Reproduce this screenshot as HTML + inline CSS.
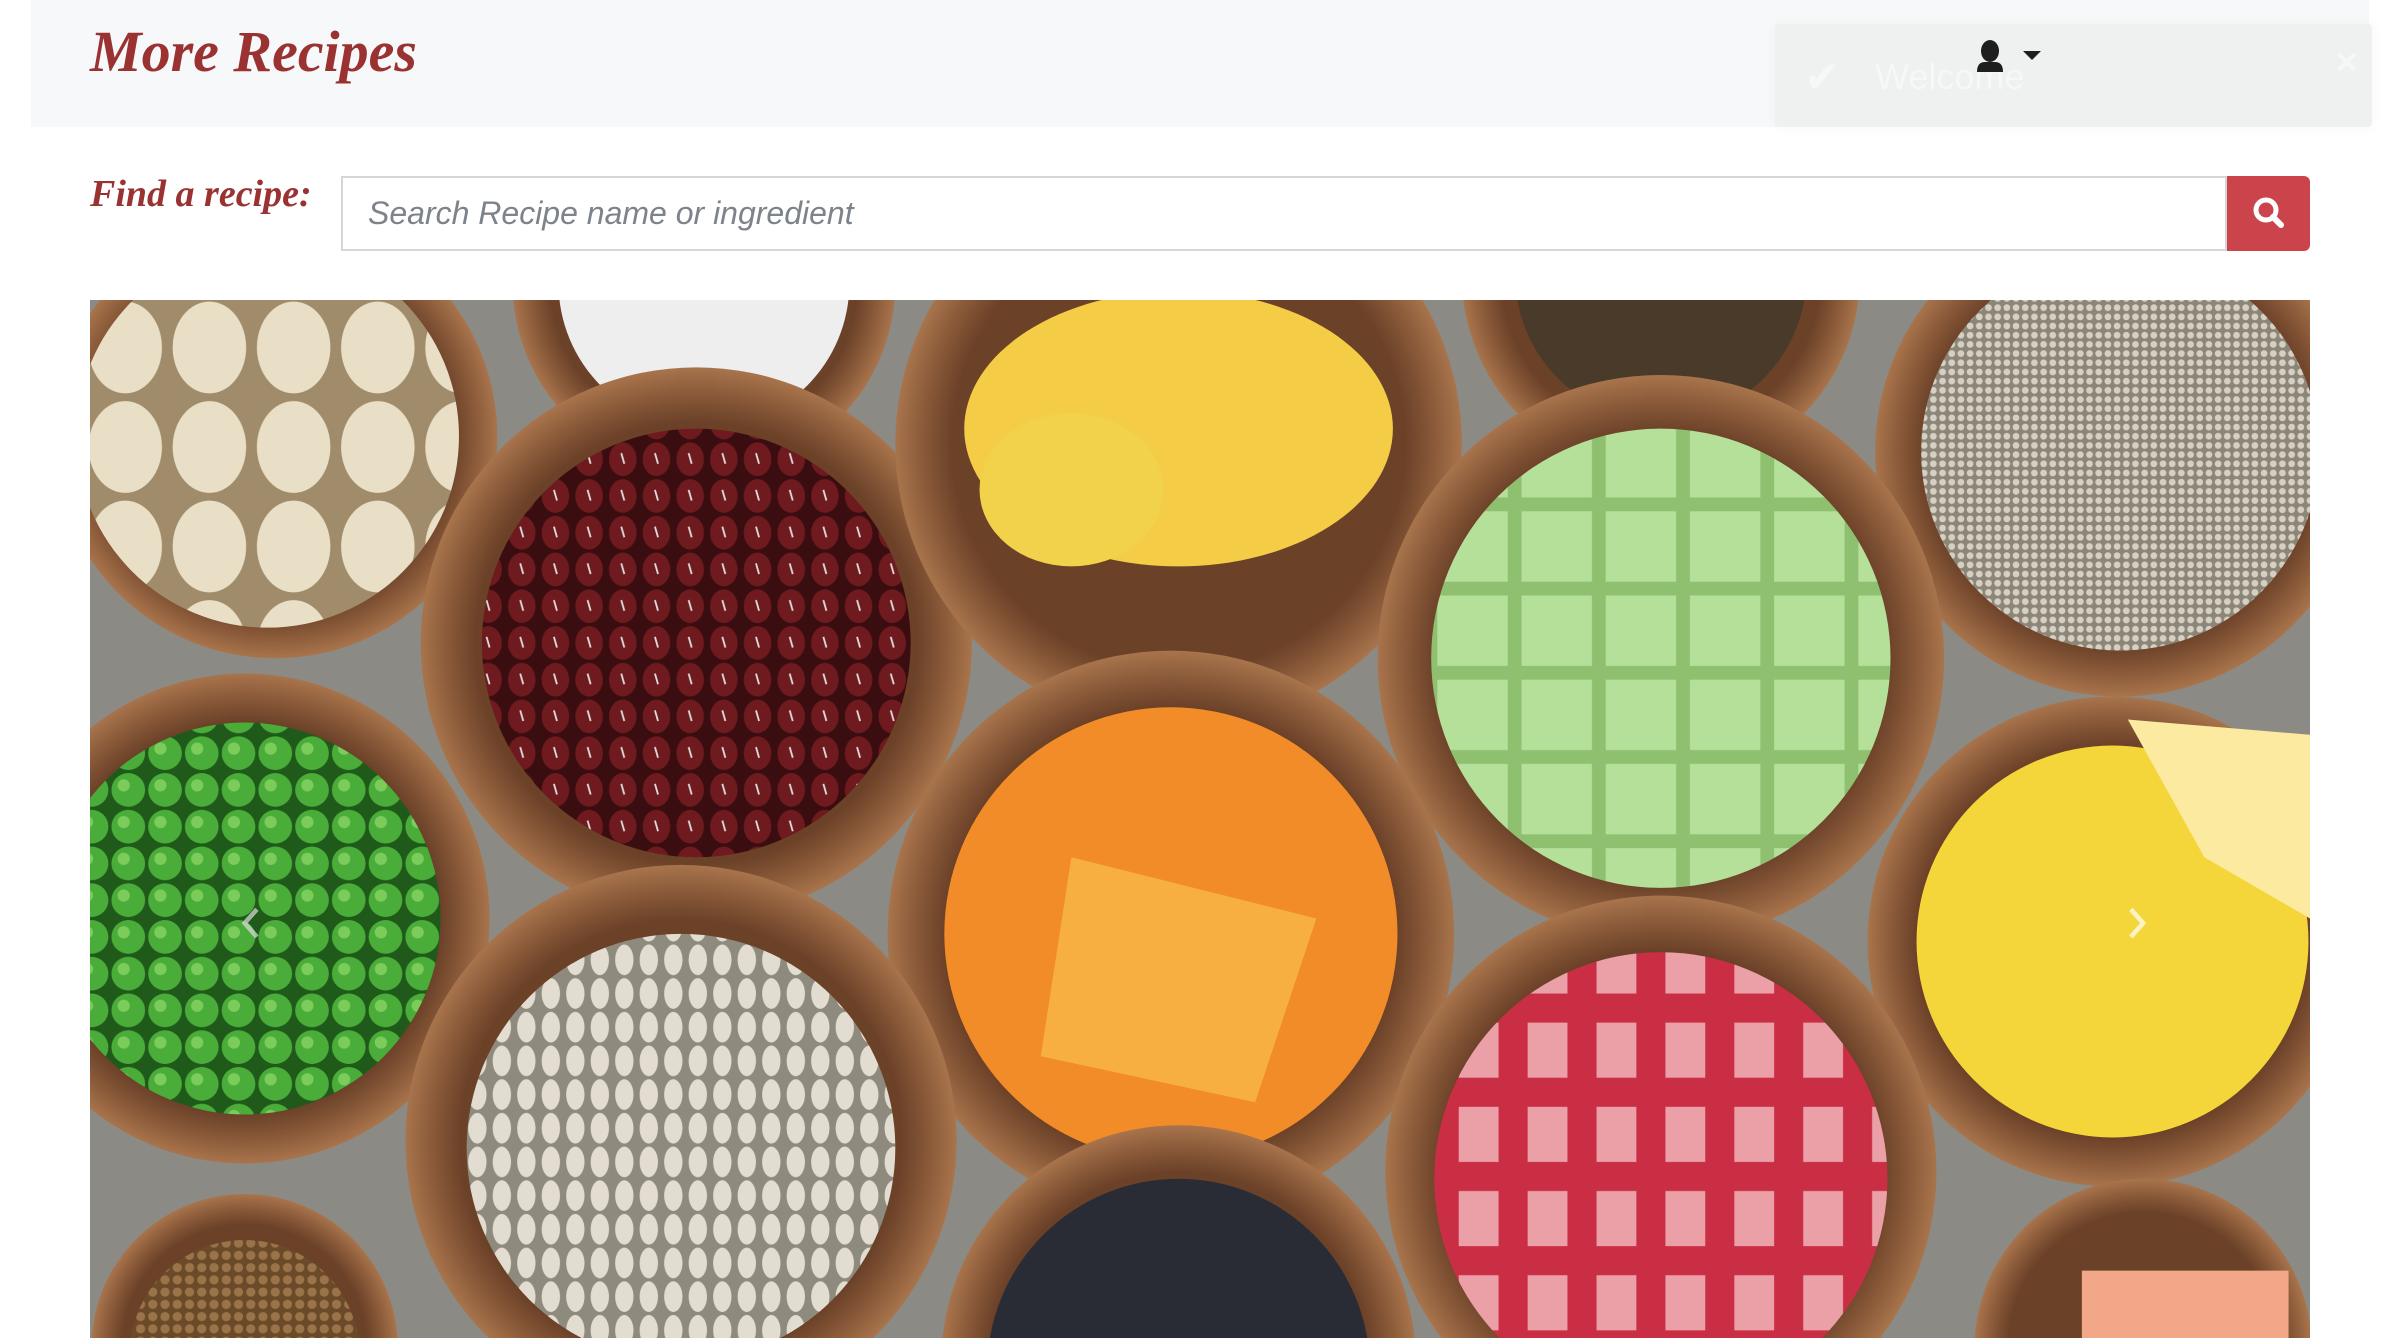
<!DOCTYPE html>
<html><head><meta charset="utf-8">
<style>
html,body{margin:0;padding:0;width:2400px;height:1338px;overflow:hidden;background:#fff;font-family:"Liberation Sans",sans-serif}
.nav{position:absolute;left:31px;top:0;width:2338px;height:127px;background:#f7f8fa}
.logo{position:absolute;left:90px;top:18px;font-family:"Liberation Serif",serif;font-style:italic;font-weight:bold;font-size:58px;color:#9a3232}
.toast{position:absolute;left:1775px;top:24px;width:597px;height:103px;background:#eef1f0;box-shadow:0 0 14px rgba(0,0,0,0.04);border-radius:4px}
.welcome{position:absolute;left:1875px;top:56px;font-size:36px;color:#f6f7f7}
.check{position:absolute;left:1804px;top:52px;font-size:44px;color:#f6f7f7}
.x{position:absolute;left:2334px;top:46px;font-size:30px;color:#f6f7f7;font-weight:bold}
.find{position:absolute;left:90px;top:172px;font-family:"Liberation Serif",serif;font-style:italic;font-weight:bold;font-size:38px;color:#9a3232}
.input{position:absolute;left:341px;top:176px;width:1882px;height:71px;border:2px solid #d6d6d6;background:#fff}
.ph{position:absolute;left:368px;top:195px;font-style:italic;font-size:32px;color:#7d838a}
.btn{position:absolute;left:2227px;top:176px;width:83px;height:75px;background:#cc444b;border-radius:0 6px 6px 0}
.img{position:absolute;left:90px;top:300px;width:2220px;height:1038px;display:block}
</style></head><body>
<div class="nav"></div>
<div class="logo">More Recipes</div>
<div class="toast"></div>
<div class="check">✔</div>
<div class="welcome">Welcome</div>
<div class="x">✕</div>
<svg style="position:absolute;left:1970px;top:36px" width="80" height="40" viewBox="0 0 80 40">
<ellipse cx="20" cy="15" rx="9" ry="11" fill="#1e1e1e"/>
<path d="M7 36 Q7 26 15 26 L25 26 Q33 26 33 36 Z" fill="#1e1e1e"/>
<path d="M53 15 L71 15 L62 24 Z" fill="#1e1e1e"/>
</svg>
<div class="find">Find a recipe:</div>
<div class="input"></div>
<div class="ph">Search Recipe name or ingredient</div>
<div class="btn"><svg width="83" height="75" viewBox="0 0 83 75"><circle cx="39" cy="34" r="10" fill="none" stroke="#fff" stroke-width="5"/><line x1="46" y1="41" x2="54" y2="49" stroke="#fff" stroke-width="6" stroke-linecap="round"/></svg></div>
<svg class="img" viewBox="59 196 1450 678" preserveAspectRatio="none">
<defs>
<radialGradient id="wood" cx="50%" cy="50%" r="50%"><stop offset="80%" stop-color="#6b4128"/><stop offset="92%" stop-color="#8f5e3c"/><stop offset="100%" stop-color="#a8744c"/></radialGradient>
<pattern id="beans" width="22" height="24" patternUnits="userSpaceOnUse"><rect width="22" height="24" fill="#3a0e10"/><ellipse cx="11" cy="12" rx="9" ry="11" fill="#6e1a1e"/><line x1="10" y1="8" x2="12" y2="15" stroke="#ddd" stroke-width="1.2"/></pattern>
<pattern id="peas" width="24" height="24" patternUnits="userSpaceOnUse"><rect width="24" height="24" fill="#1f5a1a"/><circle cx="12" cy="12" r="11" fill="#4aad3a"/><circle cx="9" cy="9" r="4" fill="#7ccc5c"/></pattern>
<pattern id="seeds" width="16" height="22" patternUnits="userSpaceOnUse"><rect width="16" height="22" fill="#8e8a7e"/><ellipse cx="8" cy="11" rx="6" ry="10" fill="#e2ddd0"/></pattern>
<pattern id="chia" width="6" height="6" patternUnits="userSpaceOnUse"><rect width="6" height="6" fill="#8c8678"/><circle cx="3" cy="3" r="2.2" fill="#d6d0c4"/></pattern>
<pattern id="pist" width="55" height="65" patternUnits="userSpaceOnUse"><rect width="55" height="65" fill="#a08c6a"/><ellipse cx="27" cy="32" rx="24" ry="30" fill="#e9dfc6"/></pattern>
<pattern id="cel" width="55" height="55" patternUnits="userSpaceOnUse"><rect width="55" height="55" fill="#8fc070"/><rect x="4" y="4" width="46" height="46" fill="#b4e09a"/></pattern>
<pattern id="rhu" width="45" height="55" patternUnits="userSpaceOnUse"><rect width="45" height="55" fill="#c92e45"/><rect x="8" y="8" width="26" height="36" fill="#eba0a8"/></pattern>
<pattern id="lent" width="8" height="8" patternUnits="userSpaceOnUse"><rect width="8" height="8" fill="#6b4a2a"/><circle cx="4" cy="4" r="3" fill="#9a7448"/></pattern>
</defs>
<rect x="59" y="196" width="1450" height="678" fill="#8c8a84"/>
<g>
<circle cx="460" cy="185" r="125" fill="url(#wood)"/><circle cx="460" cy="185" r="95" fill="#eee"/>
<circle cx="1085" cy="180" r="130" fill="url(#wood)"/><circle cx="1085" cy="180" r="95" fill="#4a3a2a"/>
<circle cx="180" cy="285" r="145" fill="url(#wood)"/><circle cx="175" cy="285" r="125" fill="url(#pist)"/>
<circle cx="1385" cy="295" r="160" fill="url(#wood)"/><circle cx="1385" cy="295" r="130" fill="url(#chia)"/>
<circle cx="455" cy="420" r="180" fill="url(#wood)"/><circle cx="455" cy="420" r="140" fill="url(#beans)"/>
<circle cx="770" cy="290" r="185" fill="url(#wood)"/><ellipse cx="770" cy="280" rx="140" ry="90" fill="#f4cc46"/><ellipse cx="700" cy="320" rx="60" ry="50" fill="#f2d24a"/>
<circle cx="1085" cy="430" r="185" fill="url(#wood)"/><circle cx="1085" cy="430" r="150" fill="url(#cel)"/>
<circle cx="160" cy="600" r="160" fill="url(#wood)"/><circle cx="160" cy="600" r="128" fill="url(#peas)"/>
<circle cx="765" cy="610" r="185" fill="url(#wood)"/><circle cx="765" cy="610" r="148" fill="#f28c28"/><path d="M700 560 L860 600 L820 720 L680 690 Z" fill="#f7b040"/>
<circle cx="1380" cy="615" r="160" fill="url(#wood)"/><circle cx="1380" cy="615" r="128" fill="#f5d63a"/><path d="M1390 470 L1509 480 L1509 600 L1440 560 Z" fill="#fbeaa0"/>
<circle cx="445" cy="745" r="180" fill="url(#wood)"/><circle cx="445" cy="750" r="140" fill="url(#seeds)"/>
<circle cx="1085" cy="765" r="180" fill="url(#wood)"/><circle cx="1085" cy="770" r="148" fill="url(#rhu)"/>
<circle cx="770" cy="890" r="155" fill="url(#wood)"/><circle cx="770" cy="895" r="125" fill="#2a2c35"/>
<circle cx="160" cy="880" r="100" fill="url(#wood)"/><circle cx="160" cy="885" r="75" fill="url(#lent)"/>
<circle cx="1400" cy="880" r="110" fill="url(#wood)"/><rect x="1360" y="830" width="135" height="60" fill="#f2a888"/>
</g>
<path d="M168 594 L160 603 L168 612" fill="none" stroke="#ddd" stroke-width="3" opacity="0.7"/>
<path d="M1392 594 L1400 603 L1392 612" fill="none" stroke="#fff" stroke-width="3" opacity="0.7"/>
</svg>
</body></html>
